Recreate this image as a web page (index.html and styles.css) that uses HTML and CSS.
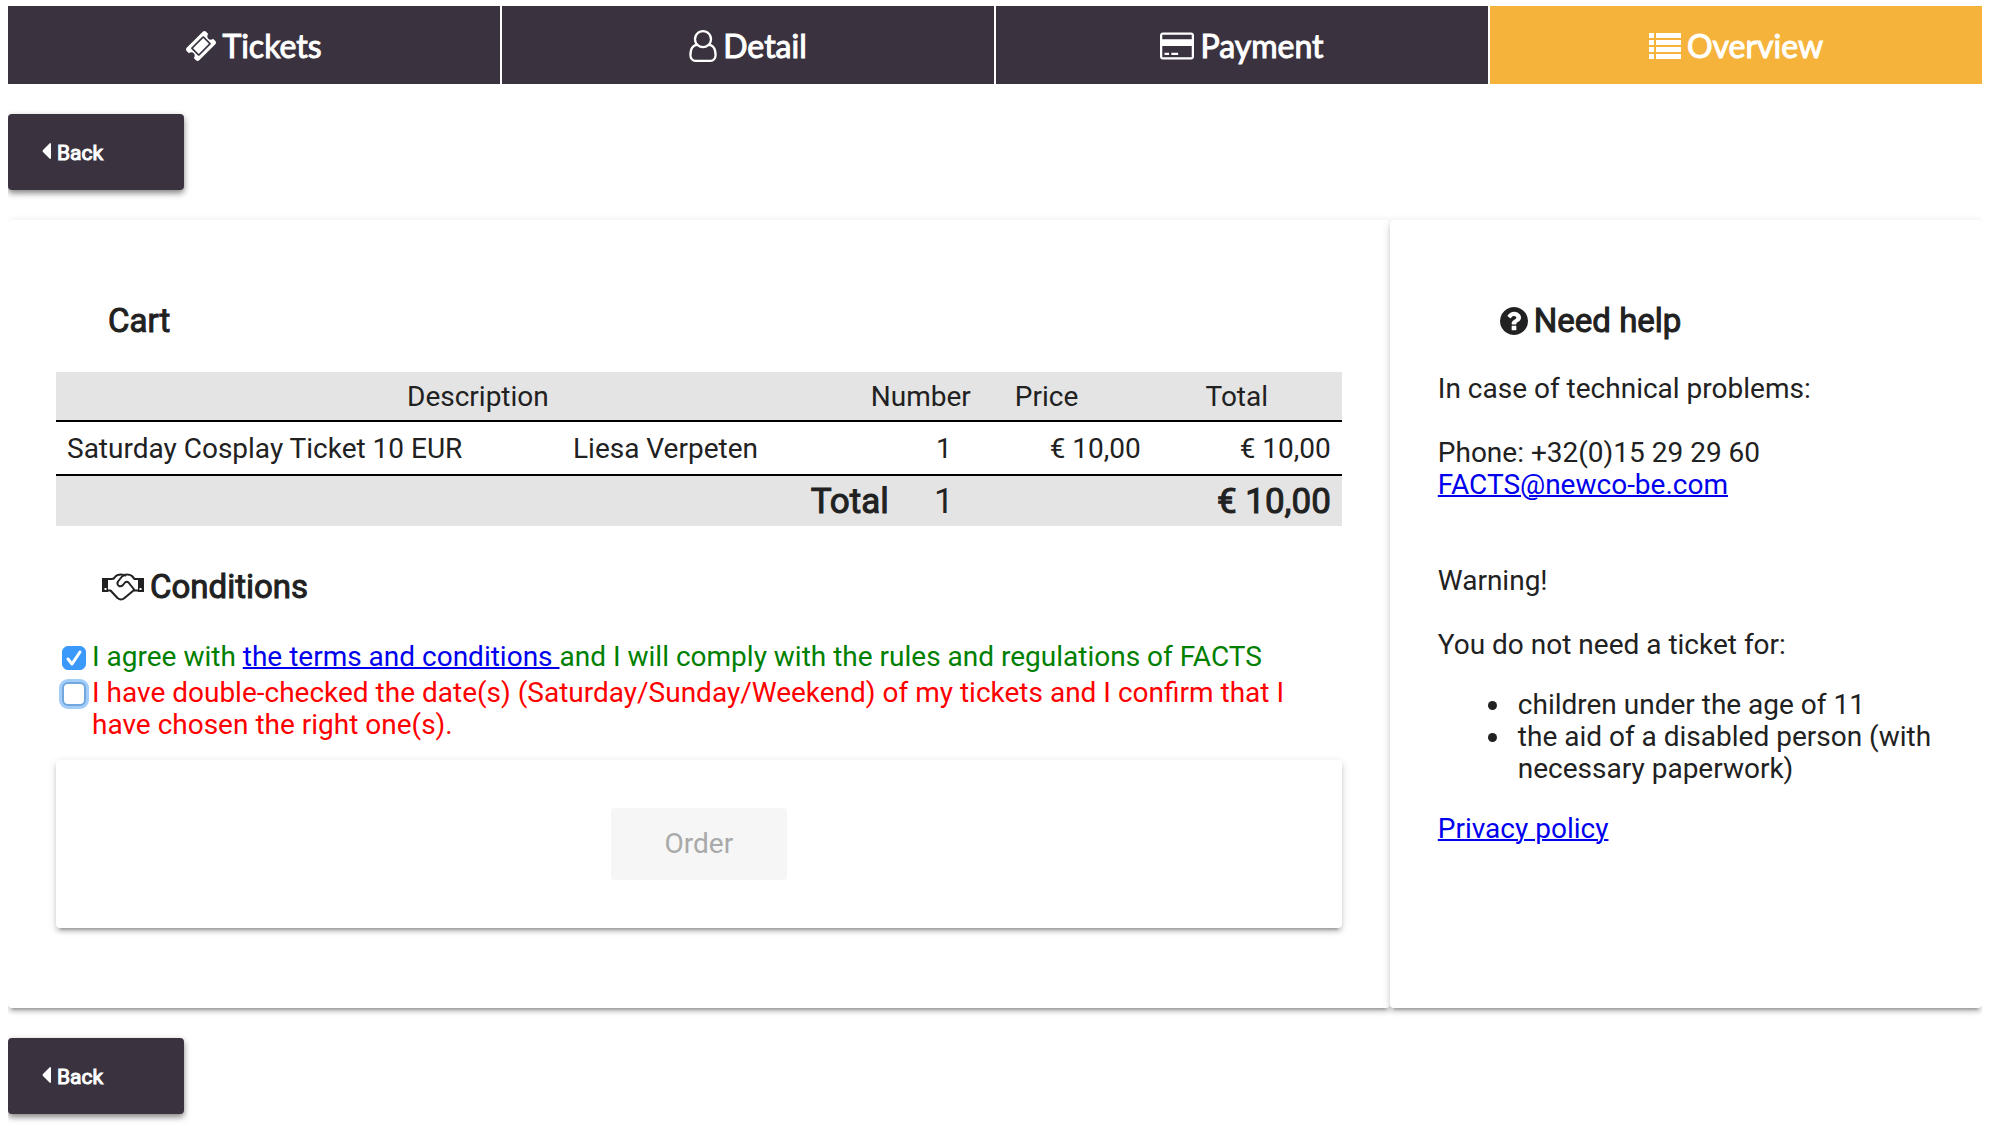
FILE: index.html
```html
<!DOCTYPE html>
<html lang="en">
<head>
<meta charset="utf-8">
<title>Overview</title>
<link rel="stylesheet" href="styles.css">
</head>
<body>
<nav class="steps">
  <a class="step" href="#tickets"><svg class="icon icon-ticket" viewBox="53 53 1686 1686"><path d="M1024 452l316 316-572 572-316-316zm-211 979l618-618q19-19 19-45t-19-45l-362-362q-18-18-45-18t-45 18l-618 618q-19 19-19 45t19 45l362 362q18 18 45 18t45-18zm889-637l-907 908q-37 37-90.5 37t-90.5-37l-126-125q56-56 56-136t-56-136-136-56-136 56l-125-126q-37-37-37-90.5t37-90.5l907-906q37-37 90.5-37t90.5 37l125 125q-56 56-56 136t56 136 136 56 136-56l126 125q37 37 37 90.5t-37 90.5z"/></svg>Tickets</a>
  <a class="step" href="#detail"><svg class="icon icon-user" viewBox="0 0 1536 1792"><path d="M1201 784q47 14 89.5 38t89 73 79.5 115.5 55 172 22 236.5q0 154-100 263.5t-241 109.5h-854q-141 0-241-109.5t-100-263.5q0-131 22-236.5t55-172 79.5-115.5 89-73 89.5-38q-79-125-79-272 0-104 40.5-198.5t109.5-163.5 163.5-109.5 198.5-40.5 198.5 40.5 163.5 109.5 109.5 163.5 40.5 198.5q0 147-79 272zm-433-656q-159 0-271.5 112.5t-112.5 271.5 112.5 271.5 271.5 112.5 271.5-112.5 112.5-271.5-112.5-271.5-271.5-112.5zm427 1536q88 0 150.5-71.5t62.5-173.5q0-239-78.5-377t-225.5-145q-145 127-336 127t-336-127q-147 7-225.5 145t-78.5 377q0 102 62.5 173.5t150.5 71.5h854z"/></svg>Detail</a>
  <a class="step" href="#payment"><svg class="icon icon-card" viewBox="0 128 1920 1536"><path d="M1760 128q66 0 113 47t47 113v1216q0 66-47 113t-113 47h-1600q-66 0-113-47t-47-113v-1216q0-66 47-113t113-47h1600zm-1600 128q-13 0-22.500 9.500t-9.500 22.500v224h1664v-224q0-13-9.500-22.500t-22.500-9.500h-1600zm1600 1280q13 0 22.500-9.500t9.500-22.500v-608h-1664v608q0 13 9.500 22.500t22.500 9.500h1600zm-1504-128v-128h256v128h-256zm384 0v-128h384v128h-384z"/></svg>Payment</a>
  <a class="step step-current" href="#overview" aria-current="step"><svg class="icon icon-list" viewBox="0 0 32 26"><path d="M0 0h5v5H0zM7 0h25v5H7zM0 7h5v5H0zM7 7h25v5H7zM0 14h5v5H0zM7 14h25v5H7zM0 21h5v5H0zM7 21h25v5H7z"/></svg>Overview</a>
</nav>

<button class="back" type="button"><svg class="icon icon-caret" viewBox="0 0 9 16"><path d="M9 1v14q0 1-1 1L1 9Q0 8 1 7L8 0q1 0 1 1z"/></svg>Back</button>

<main class="panels">
  <section class="card">
    <h2 class="title title-cart">Cart</h2>
    <table class="cart">
      <colgroup><col class="c-desc"><col><col class="c-gap"><col class="c-num"><col class="c-price"><col class="c-total"></colgroup>
      <thead>
        <tr><th class="head-desc" colspan="2">Description</th><th colspan="2">Number</th><th>Price</th><th class="head-total">Total</th></tr>
      </thead>
      <tbody>
        <tr><td>Saturday Cosplay Ticket 10 EUR</td><td colspan="2">Liesa Verpeten</td><td class="num">1</td><td class="amount">€ 10,00</td><td class="amount">€ 10,00</td></tr>
      </tbody>
      <tfoot>
        <tr><td class="amount strong" colspan="3">Total</td><td class="num">1</td><td></td><td class="amount strong">€ 10,00</td></tr>
      </tfoot>
    </table>

    <h2 class="title title-conditions"><svg class="icon icon-hands" viewBox="0 0 42 28"><path fill-rule="evenodd" d="M0 5h6v14H0zM2.500 15v2h2v-2zM36 5h6v14h-6zM37.500 15v2h2v-2z"/><path class="line" d="M6 6h4q2 0 3-2 2-2.500 6-2.500 3 0 5 1.500M6 17.500h2.500l7 7.500q3.500 3 7 0l9-7.500H36M36 6h-3.500L30 3q-2-1.500-5-1.500-3 0-5 2l-4 5q-1.500 3 1 4.500 2 1 4-1l2-2.500q2-1.500 3.500 0l6 7.500"/></svg>Conditions</h2>
    <div class="check agreed">
      <input class="box" type="checkbox" id="terms" checked>
      <label for="terms">I agree with <a href="#terms-text">the terms and conditions </a>and I will comply with the rules and regulations of FACTS</label>
    </div>
    <div class="check missing">
      <input class="box box-focus" type="checkbox" id="dates">
      <label for="dates">I have double-checked the date(s) (Saturday/Sunday/Weekend) of my tickets and I confirm that I have chosen the right one(s).</label>
    </div>
    <div class="card order-box"><button class="order" type="button" disabled>Order</button></div>
  </section>

  <aside class="card help">
    <h2 class="title"><svg class="icon icon-help" viewBox="128 128 1536 1536"><path d="M1024 1376v-192q0-14-9-23t-23-9h-192q-14 0-23 9t-9 23v192q0 14 9 23t23 9h192q14 0 23-9t9-23zm256-672q0-88-55.500-163t-138.500-116-170-41q-243 0-371 213-15 24 8 42l132 100q7 6 19 6 16 0 25-12 53-68 86-92 34-24 86-24 48 0 85.500 26t37.500 59q0 38-20 61t-68 45q-63 28-115.500 86.500t-52.500 125.500v36q0 14 9 23t23 9h192q14 0 23-9t9-23q0-19 21.500-49.500t54.500-49.500q32-18 49-28.500t46-35 44.500-48 28-60.500 12.500-81zm384 192q0 209-103 385.500t-279.500 279.500-385.500 103-385.500-103-279.500-279.500-103-385.500 103-385.500 279.500-279.500 385.500-103 385.500 103 279.500 279.500 103 385.500z"/></svg>Need help</h2>
    <p>In case of technical problems:</p>
    <p>Phone: +32(0)15 29 29 60<br><a href="mailto:FACTS@newco-be.com">FACTS@newco-be.com</a></p>
    <p class="warning">Warning!</p>
    <p>You do not need a ticket for:</p>
    <ul class="free">
      <li>children under the age of 11</li>
      <li>the aid of a disabled person (with necessary paperwork)</li>
    </ul>
    <p class="privacy"><a href="#privacy">Privacy policy</a></p>
  </aside>
</main>

<button class="back" type="button"><svg class="icon icon-caret" viewBox="0 0 9 16"><path d="M9 1v14q0 1-1 1L1 9Q0 8 1 7L8 0q1 0 1 1z"/></svg>Back</button>
</body>
</html>
```
FILE: styles.css
```css
* { box-sizing: border-box; }

body {
  margin: 6px 14px 18px 8px;
  background: #fff;
  color: #212121;
  font: 28px/32px Roboto, sans-serif;
}

a { color: #0000ee; text-decoration-thickness: 2px; }

.icon { flex: none; fill: currentColor; }

.steps {
  display: grid;
  grid-template-columns: repeat(4, 1fr);
  gap: 2px;
}
.step {
  display: flex;
  align-items: center;
  justify-content: center;
  gap: 6px;
  height: 78px;
  padding-top: 2px;
  background: #3a333f;
  color: #fff;
  font: 32px/40px Lato, sans-serif;
  text-decoration: none;
  -webkit-text-stroke: 1px;
}
.step-current { background: #f6b33c; }
.step .icon, .back .icon, .title .icon { -webkit-text-stroke: 0; }
.icon-ticket { width: 30px; height: 30px; }
.icon-user { width: 28px; height: 32px; }
.icon-card { width: 34px; height: 28px; }
.icon-list { width: 32px; height: 26px; }
.icon-caret { width: 9px; height: 16px; margin-bottom: 4px; }
.icon-hands { width: 42px; height: 28px; }
.icon-help { width: 28px; height: 28px; }
.line {
  fill: none;
  stroke: currentColor;
  stroke-width: 2;
  stroke-linejoin: round;
}

.back {
  display: flex;
  align-items: center;
  gap: 6px;
  width: 176px;
  height: 76px;
  margin: 30px 0;
  padding: 2px 34px 0;
  border: 0;
  border-radius: 4px;
  background: #3a333f;
  box-shadow: 0 3px 6px rgba(0, 0, 0, .5);
  color: #fff;
  font: 21px/26px Roboto, sans-serif;
  -webkit-text-stroke: 1px;
}

.card {
  padding: 48px;
  border-radius: 4px;
  background: #fff;
  box-shadow: 0 6px 2px -4px rgba(0, 0, 0, .2), 0 4px 4px rgba(0, 0, 0, .14), 0 2px 10px rgba(0, 0, 0, .12);
}
.panels {
  display: grid;
  grid-template-columns: 7fr 3fr;
}
.panels > .card { padding-bottom: 80px; }

.title {
  display: flex;
  align-items: center;
  gap: 6px;
  margin: 33px 0 32px;
  padding-left: 46px;
  font-size: 33px;
  line-height: 40px;
  font-weight: 400;
  -webkit-text-stroke: 1px;
}
.title-cart { margin-bottom: 31px; padding-left: 52px; }
.title-conditions { margin: 41px 0 34px; }

.cart {
  width: 100%;
  border-collapse: collapse;
  table-layout: fixed;
}
.cart th, .cart td { padding: 2px 11px 0; font-weight: 400; text-align: left; }
.cart thead, .cart tfoot { background: #e4e4e4; }
.cart thead tr { height: 49px; }
.cart tbody tr { height: 54px; border: solid #000; border-width: 2px 0; }
.cart tfoot tr { height: 51px; font-size: 35px; }
.c-desc { width: 506px; }
.c-gap { width: 40px; }
.c-num { width: 104px; }
.c-price { width: 148px; }
.c-total { width: 190px; }
.cart .head-desc { padding-left: 51px; text-align: center; }
.cart .head-total { padding-right: 31px; text-align: center; }
.cart .num { padding-right: 27px; text-align: center; }
.cart .amount { text-align: right; }
.cart .strong { -webkit-text-stroke: 1px; }

.check { display: grid; grid-template-columns: 24px 1fr; gap: 6px; margin: 4px 6px 0; }
.agreed { color: #008000; }
.missing { color: #ff0000; }
.box {
  appearance: none;
  width: 24px;
  height: 24px;
  margin: 5px 0 0;
  border: 1px solid #b4b4b4;
  border-radius: 6px;
  background: #fff;
}
.box:checked {
  border-color: #3b99fc;
  background: #3b99fc url("data:image/svg+xml,%3Csvg xmlns='http://www.w3.org/2000/svg' viewBox='0 0 22 22'%3E%3Cpath d='M5 12l4 5 8-12' fill='none' stroke='%23fff' stroke-width='3' stroke-linecap='round' stroke-linejoin='round'/%3E%3C/svg%3E");
}
.box-focus { border: 2px solid #71a7dd; box-shadow: 0 0 0 3px #a3cdf9; }

.order-box {
  display: flex;
  justify-content: center;
  margin-top: 19px;
}
.order {
  width: 176px;
  height: 72px;
  border: 0;
  border-radius: 4px;
  background: #f6f6f6;
  color: #a9a9a9;
  font: 28px/32px Roboto, sans-serif;
}

.help .title { padding-left: 62px; }
.help p { margin: 32px 0 0; }
.help .warning { margin-top: 64px; }
.help .privacy { margin-top: 28px; }
.free { margin: 28px 0 0; padding-left: 74px; }
.free li { padding-left: 6px; }
```
